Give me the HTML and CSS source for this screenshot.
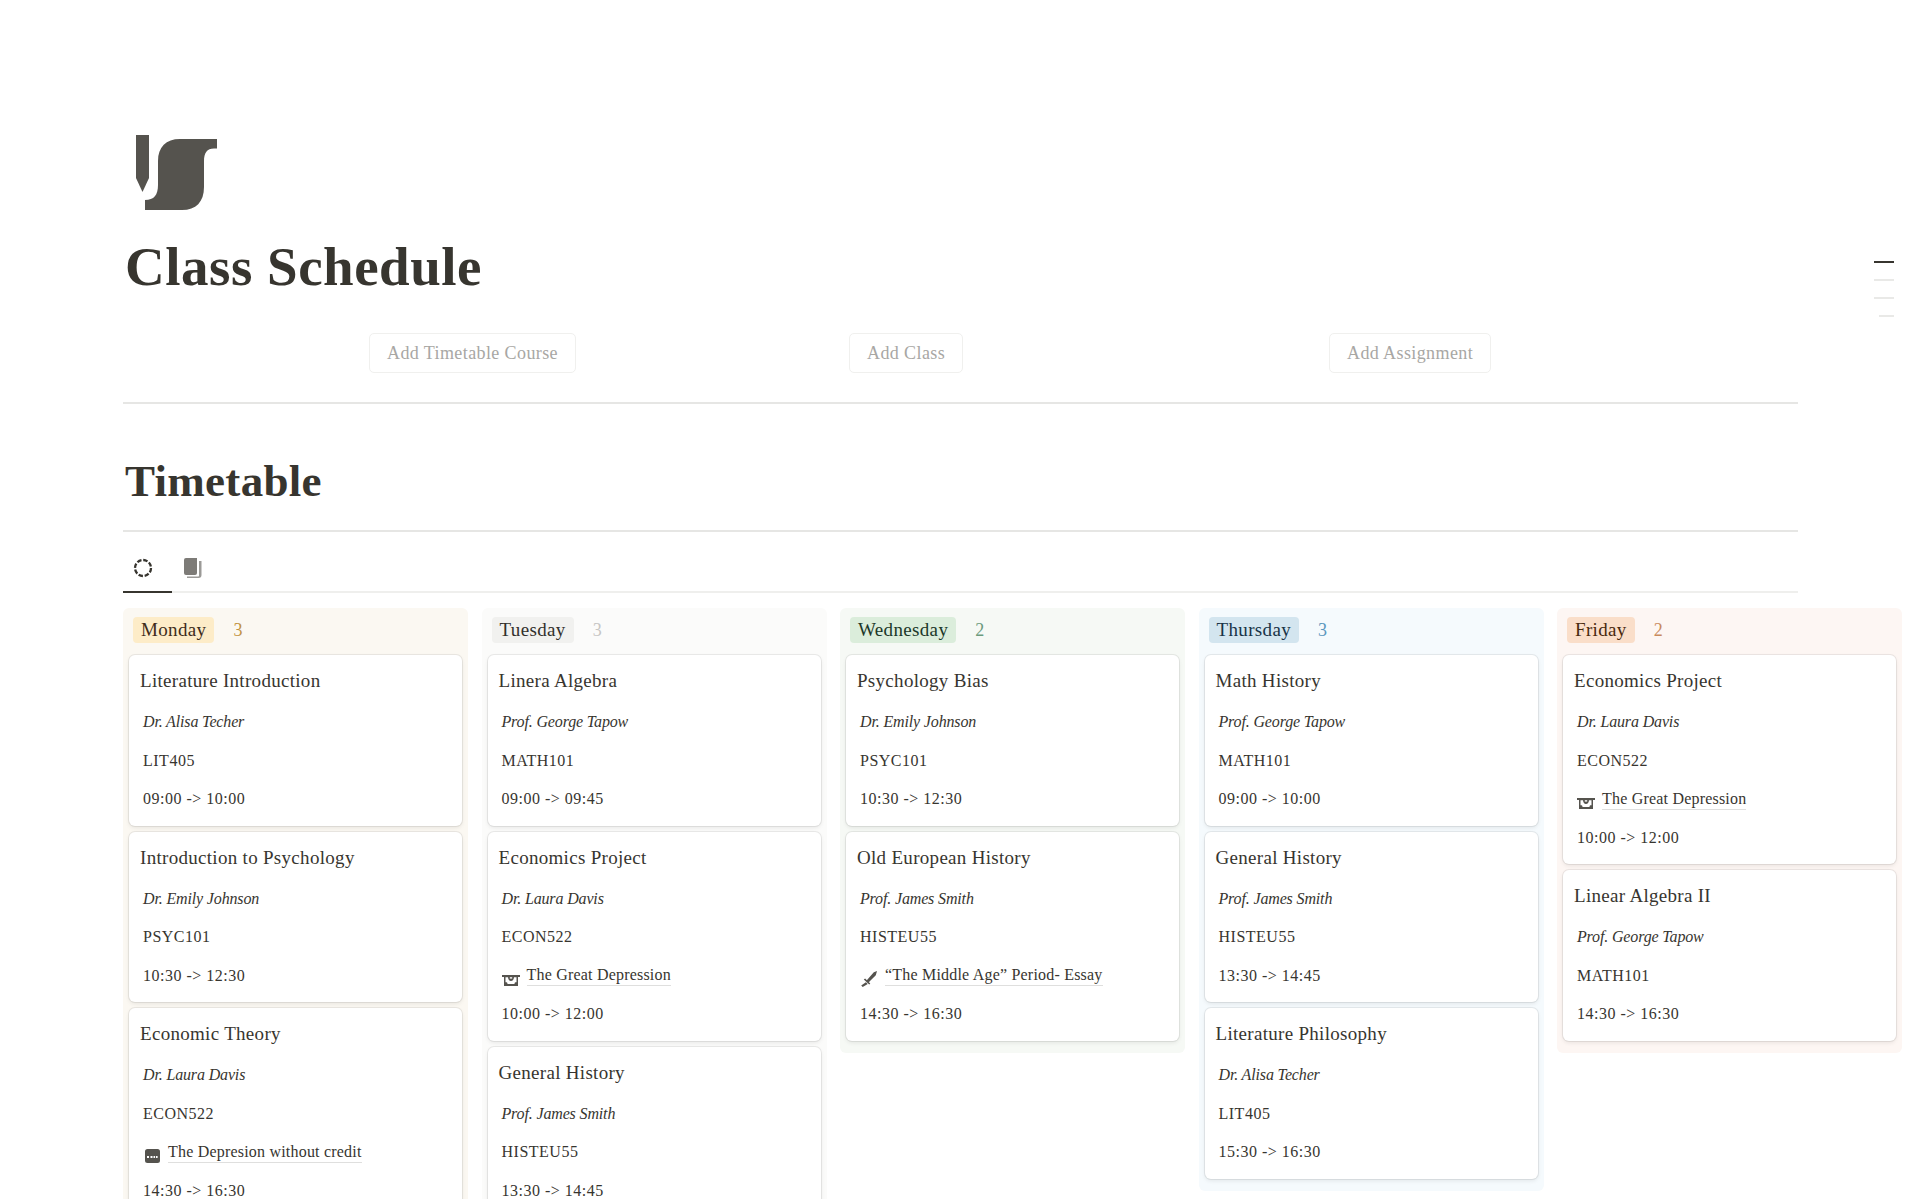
FILE: index.html
```html
<!DOCTYPE html>
<html lang="en">
<head>
<meta charset="utf-8">
<title>Class Schedule</title>
<link rel="stylesheet" href="styles.css">
</head>
<body>
<svg class="defs" width="0" height="0" aria-hidden="true">
  <symbol id="i-note" viewBox="0 0 18 16"><path d="M0 4h18v2h-2v9H2V6H0z" fill="#55534e"/><path d="M3.500 6.200H6c.2 2.300 1.300 3.800 3 3.800s2.800-1.500 3-3.800h2.500v5c-1.500 0-2 .4-2 1.800H5.500c0-1.400-.5-1.800-2-1.800z" fill="#fff"/><path d="M7.800 6.200h2.400v1.400H7.800z" fill="#fff"/></symbol>
  <symbol id="i-sword" viewBox="0 0 18 16"><path d="M17 0l-1.200 4.300-7.300 7.200-1.900-1.900L13.800 1.200z M3.800 8.400l1.300-1 5.200 5-1.100 1.200z M5.900 11.300l1.800 1.700-5 3-1.500-1.500z" fill="#55534e"/></symbol>
  <symbol id="i-card" viewBox="0 0 18 16"><path d="M4.500 2h10A2.500 2.500 0 0 1 17 4.500v9a2.500 2.500 0 0 1-2.500 2.500h-10A2.500 2.500 0 0 1 2 13.500v-9A2.500 2.500 0 0 1 4.500 2z" fill="#55534e"/><path d="M4 9h2v2H4zM7.500 9h2v2h-2zM10.500 9h1.600v2h-1.600zM13 9h1.600v2H13z" fill="#fff"/></symbol>
</svg>

<main class="page">
  <header class="hero">
    <svg class="logo" viewBox="0 0 82 75" aria-label="Logo">
      <path d="M0 0H13V43L6.500 57 0 43z" fill="#55534e"/>
      <path d="M9 75V65C18 65 22 60 22 50V26C22 12 30 4 44 4H81V13.500H78C71 13.500 68 18 68 26V52C68 67 60 75 46 75z" fill="#55534e"/>
    </svg>
    <h1 class="title">Class Schedule</h1>
    <div class="actions">
      <div class="action-cell"><span class="btn">Add Timetable Course</span></div>
      <div class="action-cell"><span class="btn">Add Class</span></div>
      <div class="action-cell"><span class="btn">Add Assignment</span></div>
    </div>
  </header>

  <hr class="rule rule-top">
  <h2 class="section">Timetable</h2>
  <hr class="rule rule-section">

  <nav class="tabs">
    <span class="tab tab-active">
      <svg class="tab-icon" viewBox="0 0 20 20"><circle cx="10" cy="10" r="8" fill="none" stroke="#37352f" stroke-width="2.300" stroke-dasharray="4.500 1.780"/></svg>
    </span>
    <span class="tab">
      <svg class="tab-icon" viewBox="0 0 20 20"><path d="M1 2a2 2 0 0 1 2-2h11v15a2 2 0 0 1-2 2H3a2 2 0 0 1-2-2z" fill="#7d7b77"/><path d="M16 3h2.500v14a3 3 0 0 1-3 3H4v-1.500h11.500a1 1 0 0 0 .5-1z" fill="#9b9a97"/></svg>
    </span>
  </nav>

  <section class="board">
    <div class="col col-mon">
      <div class="col-head"><span class="pill">Monday</span><span class="count">3</span></div>
      <article class="card"><h3>Literature Introduction</h3><p class="who">Dr. Alisa Techer</p><p>LIT405</p><p>09:00 -&gt; 10:00</p></article>
      <article class="card"><h3>Introduction to Psychology</h3><p class="who">Dr. Emily Johnson</p><p>PSYC101</p><p>10:30 -&gt; 12:30</p></article>
      <article class="card"><h3>Economic Theory</h3><p class="who">Dr. Laura Davis</p><p>ECON522</p><p class="ref"><svg class="ref-icon"><use href="#i-card"/></svg><span class="link">The Depresion without credit</span></p><p>14:30 -&gt; 16:30</p></article>
    </div>
    <div class="col col-tue">
      <div class="col-head"><span class="pill">Tuesday</span><span class="count">3</span></div>
      <article class="card"><h3>Linera Algebra</h3><p class="who">Prof. George Tapow</p><p>MATH101</p><p>09:00 -&gt; 09:45</p></article>
      <article class="card"><h3>Economics Project</h3><p class="who">Dr. Laura Davis</p><p>ECON522</p><p class="ref"><svg class="ref-icon"><use href="#i-note"/></svg><span class="link">The Great Depression</span></p><p>10:00 -&gt; 12:00</p></article>
      <article class="card"><h3>General History</h3><p class="who">Prof. James Smith</p><p>HISTEU55</p><p>13:30 -&gt; 14:45</p></article>
    </div>
    <div class="col col-wed">
      <div class="col-head"><span class="pill">Wednesday</span><span class="count">2</span></div>
      <article class="card"><h3>Psychology Bias</h3><p class="who">Dr. Emily Johnson</p><p>PSYC101</p><p>10:30 -&gt; 12:30</p></article>
      <article class="card"><h3>Old European History</h3><p class="who">Prof. James Smith</p><p>HISTEU55</p><p class="ref"><svg class="ref-icon"><use href="#i-sword"/></svg><span class="link">“The Middle Age” Period- Essay</span></p><p>14:30 -&gt; 16:30</p></article>
    </div>
    <div class="col col-thu">
      <div class="col-head"><span class="pill">Thursday</span><span class="count">3</span></div>
      <article class="card"><h3>Math History</h3><p class="who">Prof. George Tapow</p><p>MATH101</p><p>09:00 -&gt; 10:00</p></article>
      <article class="card"><h3>General History</h3><p class="who">Prof. James Smith</p><p>HISTEU55</p><p>13:30 -&gt; 14:45</p></article>
      <article class="card"><h3>Literature Philosophy</h3><p class="who">Dr. Alisa Techer</p><p>LIT405</p><p>15:30 -&gt; 16:30</p></article>
    </div>
    <div class="col col-fri">
      <div class="col-head"><span class="pill">Friday</span><span class="count">2</span></div>
      <article class="card"><h3>Economics Project</h3><p class="who">Dr. Laura Davis</p><p>ECON522</p><p class="ref"><svg class="ref-icon"><use href="#i-note"/></svg><span class="link">The Great Depression</span></p><p>10:00 -&gt; 12:00</p></article>
      <article class="card"><h3>Linear Algebra II</h3><p class="who">Prof. George Tapow</p><p>MATH101</p><p>14:30 -&gt; 16:30</p></article>
    </div>
  </section>
</main>

<aside class="outline" aria-hidden="true">
  <span class="tick tick-on"></span>
  <span class="tick"></span>
  <span class="tick"></span>
  <span class="tick tick-short"></span>
</aside>
</body>
</html>
```

FILE: styles.css
```css
* { box-sizing: border-box; }
html, body {
  margin: 0;
  height: 1199px;
  overflow: hidden;
  background: #fff;
}
body {
  font-family: "Liberation Serif", "Times New Roman", serif;
  color: #37352f;
  position: relative;
}
.defs { position: absolute; }

.page { padding: 135px 0 0 123px; width: 1798px; }

.hero { display: block; }
.logo { display: block; width: 82px; height: 75px; margin-left: 13px; }
.title {
  margin: 26px 0 0 2px;
  font-size: 55px;
  line-height: 62px;
  font-weight: 700;
  letter-spacing: 0.5px;
  color: #37352f;
}
.actions {
  display: grid;
  grid-template-columns: repeat(3, 480px);
  margin: 35px 0 0 246px;
}
.action-cell { display: flex; justify-content: flex-start; }
.btn {
  height: 40px;
  display: flex;
  align-items: center;
  padding: 0 17px;
  border: 1px solid #f0f0ee;
  border-radius: 5px;
  font-size: 18px;
  letter-spacing: 0.4px;
  color: #a8a7a4;
}

.rule { border: 0; height: 2px; background: #e6e6e4; margin: 0; }
.rule-top { margin-top: 29px; }
.section {
  margin: 50px 0 0 2px;
  font-size: 45px;
  line-height: 54px;
  font-weight: 700;
  letter-spacing: 0.3px;
}
.rule-section { margin-top: 22px; }

.tabs {
  display: flex;
  height: 61px;
  border-bottom: 2px solid #efefed;
}
.tab {
  width: 49px;
  height: 61px;
  display: flex;
  align-items: center;
  justify-content: center;
  padding-top: 11px;
  margin-bottom: -2px;
}
.tab-active { border-bottom: 2px solid #37352f; padding-top: 13px; padding-right: 9px; }
.tab-icon { width: 20px; height: 20px; display: block; }
.tab:not(.tab-active) .tab-icon { margin-left: -7px; }

.board {
  display: grid;
  grid-template-columns: repeat(5, 345px);
  column-gap: 13.5px;
  margin-top: 15px;
  align-items: start;
  width: 1779px;
}
.col { border-radius: 6px; padding: 0 6px 12px; }
.col-head {
  display: flex;
  align-items: flex-start;
  height: 46px;
  padding: 9px 0 0 4px;
}
.pill {
  height: 26px;
  display: flex;
  align-items: center;
  padding: 0 8px;
  border-radius: 4px;
  font-size: 19px;
  letter-spacing: 0.35px;
}
.count { margin-left: 19px; font-size: 18px; line-height: 26px; }

.col-mon { background: #fbf8f2; }
.col-mon .pill { background: #fdecc8; color: #402c1b; }
.col-mon .count { color: #c29343; }
.col-tue { background: #fbfbfa; }
.col-tue .pill { background: #f1f1ef; color: #32302c; }
.col-tue .count { color: #c7c6c4; }
.col-wed { background: #f6f9f5; }
.col-wed .pill { background: #dbeddb; color: #1c3829; }
.col-wed .count { color: #6c9b7d; }
.col-thu { background: #f5fafd; }
.col-thu .pill { background: #d3e5ef; color: #183347; }
.col-thu .count { color: #5b97bd; }
.col-fri { background: #fdf6f3; }
.col-fri .pill { background: #fadec9; color: #49290e; }
.col-fri .count { color: #c98a5d; }

.card {
  background: #fff;
  border-radius: 6px;
  box-shadow: 0 0 0 1px rgba(15, 15, 15, 0.07), 0 2px 4px rgba(15, 15, 15, 0.08);
  margin-top: 6px;
  padding: 13px 11px 7px 11px;
}
.col-head + .card { margin-top: 1px; }
.card h3 {
  margin: 0;
  font-size: 19px;
  font-weight: 400;
  line-height: 25px;
  letter-spacing: 0.3px;
  color: #37352f;
}
.card p {
  margin: 0 0 0 3px;
  font-size: 16px;
  height: 38.5px;
  line-height: 38.5px;
  letter-spacing: 0.5px;
  color: #37352f;
}
.card h3 + p { margin-top: 10px; }
.card .who { font-style: italic; font-size: 16px; letter-spacing: -0.15px; }
.ref { display: flex; align-items: center; }
.ref-icon { width: 18px; height: 16px; flex: none; margin-right: 7px; margin-top: 6px; }
.link {
  line-height: 20px;
  letter-spacing: 0.2px;
  border-bottom: 1px solid #dfdfde;
}

.outline {
  position: absolute;
  top: 261px;
  left: 1874px;
  width: 20px;
  display: flex;
  flex-direction: column;
  align-items: flex-end;
  gap: 16px;
}
.tick { display: block; width: 20px; height: 2px; background: #e9e9e7; }
.tick-on { background: #37352f; }
.tick-short { width: 15px; }
```
